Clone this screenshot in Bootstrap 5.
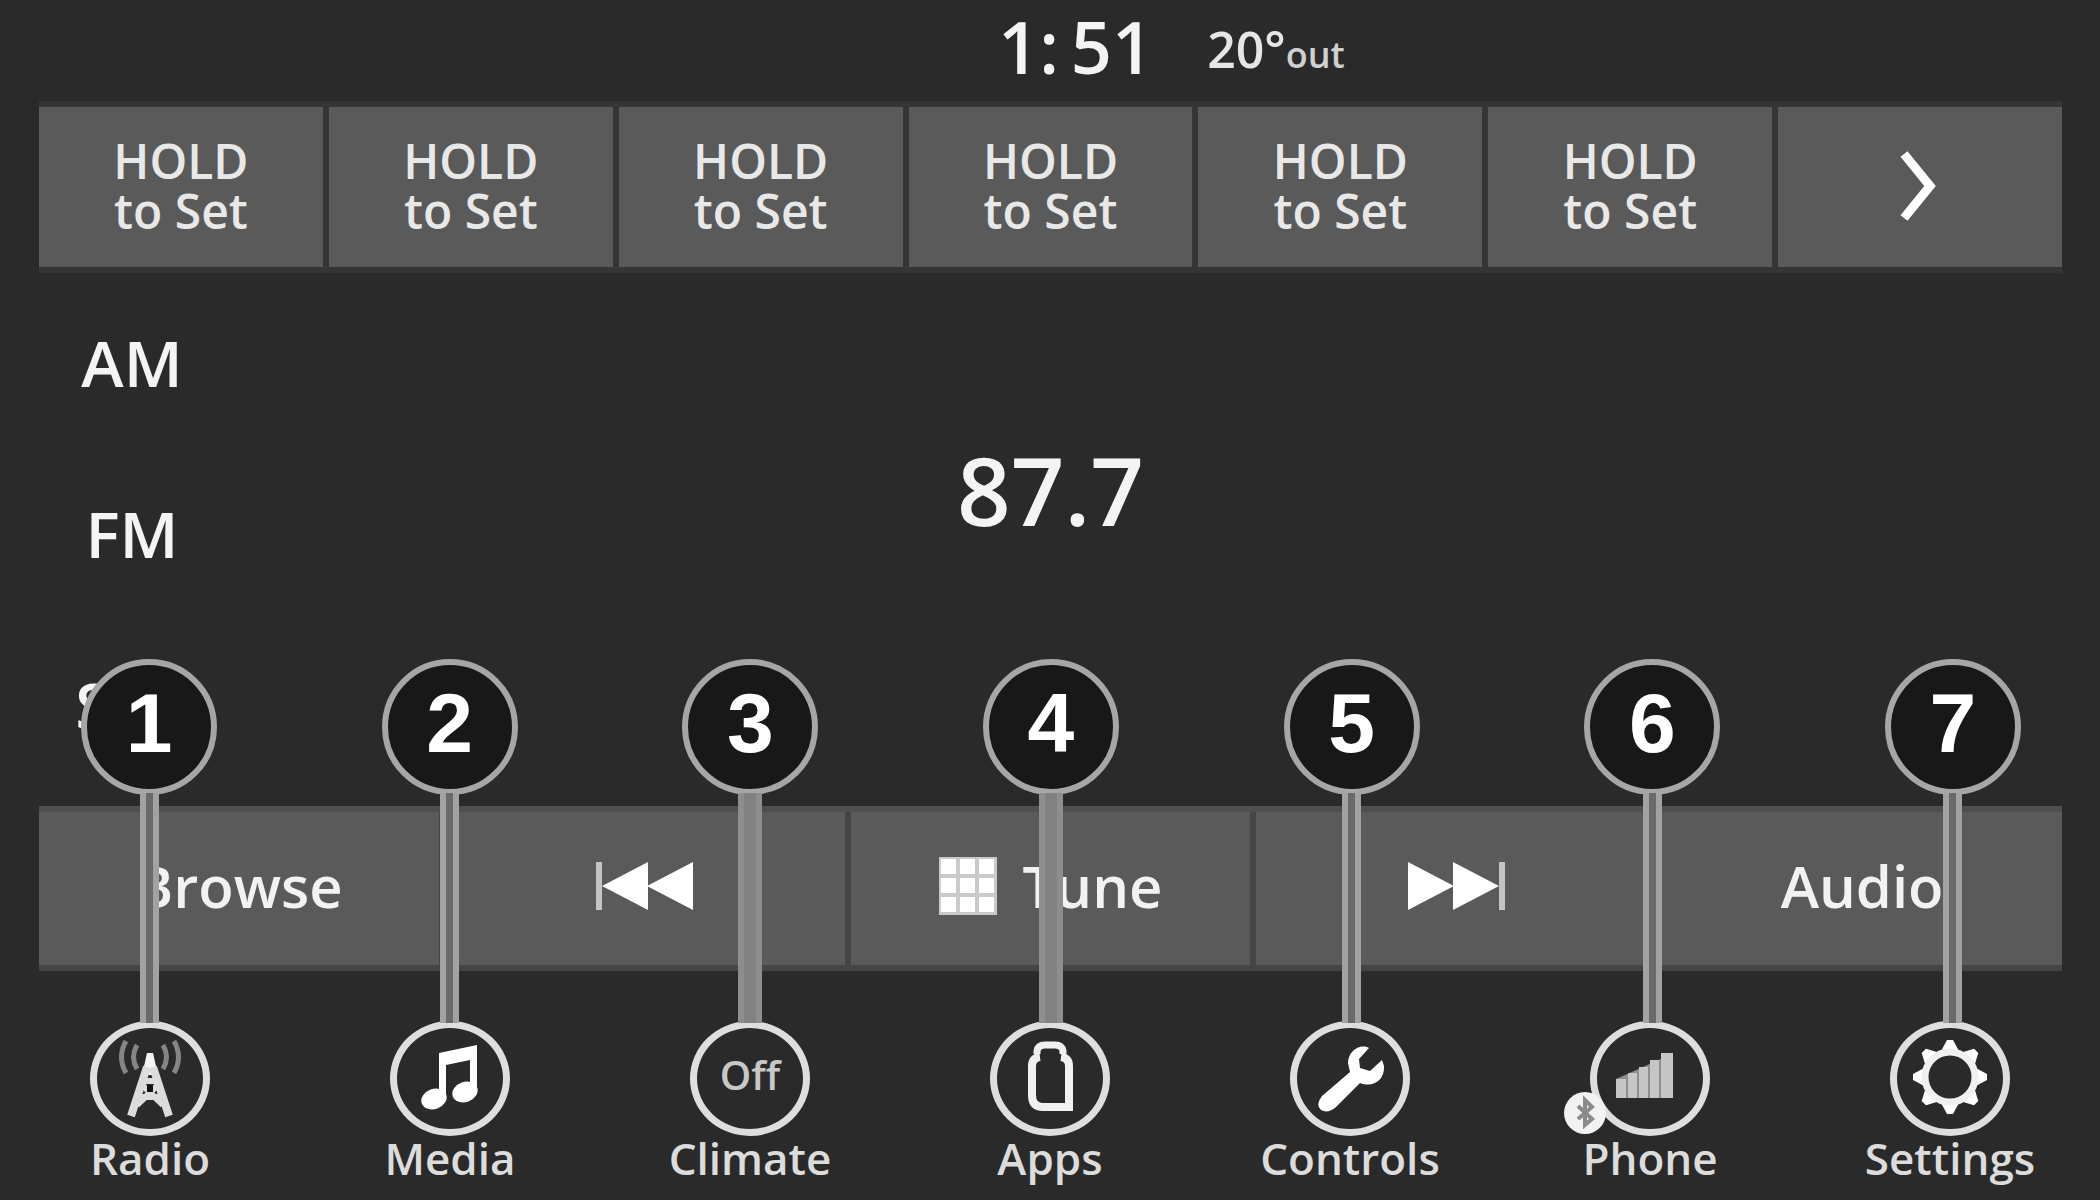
<!DOCTYPE html>
<html lang="en">
<head>
<meta charset="utf-8">
<meta name="viewport" content="width=device-width, initial-scale=1">
<title>Radio</title>
<link href="https://cdn.jsdelivr.net/npm/bootstrap@5.3.0/dist/css/bootstrap.min.css" rel="stylesheet">
<style>
  body { background: #2a2a2a; color: #f4f4f4; font-family: "Open Sans", "Noto Sans", sans-serif; font-weight: 600; }
  .key { background: #5a5a5a; border: 0; border-radius: 0; color: #f2f2f2; font-weight: 600; padding: 0; }
  .key:hover, .key:focus { background: #646464; color: #fff; }
  .bare { background: none; border: 0; color: inherit; font-weight: 600; padding: 0; }

  .status { height: 101px; }
  .readout { margin-left: -52px; }
  .clock { font-size: 72px; line-height: 92px; }
  .outside { font-size: 50px; line-height: 98px; margin-left: 54px; color: #e6e6e6; }
  .outside small { font-size: 36px; font-weight: 600; color: #d0d0d0; }

  .edge { margin: 0 38px 0 39px; }
  .presets { background: #353535; gap: 6px; padding: 6px 0; }
  .presets .key { height: 160px; font-size: 48px; line-height: 50px; color: #e8e8e8; padding-bottom: 2px; }

  .tuner { padding-top: 4px; }
  .bands { width: 186px; }
  .bands .bare { height: 171px; font-size: 64px; line-height: 64px; }
  .frequency { font-size: 94px; line-height: 100px; padding-bottom: 104px; }

  .transport { background: #454545; gap: 6px; padding-bottom: 6px; border-top: 6px solid #4f4f4f; }
  .transport .key { height: 153px; font-size: 58px; line-height: 60px; gap: 26px; padding-bottom: 5px; }

  .dock { padding: 50px 0 20px; }
  .dock-item { font-size: 44px; line-height: 44px; color: #dcdcdc; }
  .ring { width: 120px; height: 115px; border: 7px solid #dedede; border-radius: 50%; background: #2a2a2a; }
  .ring svg { position: absolute; left: -7px; top: -7px; }
  .ring .signal { left: -35px; }
  .ring-text { font-size: 40px; line-height: 44px; padding-bottom: 8px; color: #c8c8c8; }
  .callouts { position: absolute; left: 0; right: 0; bottom: calc(100% - 52px); padding: 0 79px 0 81px; pointer-events: none; }
  .bubble { width: 136px; height: 136px; border: 6px solid #a6a6a6; border-radius: 50%; background: #181818; color: #fff; font: 700 84px/116px "Liberation Sans", sans-serif; padding-bottom: 4px; }
  .stem { width: 19px; height: 230px; margin-top: -2px; background: #6a6a6a; border: solid #a2a2a2; border-width: 0 6px; }
  .stem-soft { width: 24px; background: #828282; border-color: #8e8e8e; }
</style>
</head>
<body class="d-flex flex-column min-vh-100 overflow-x-hidden">

<header class="status position-relative d-flex">
  <div class="w-50"></div>
  <div class="readout d-flex align-items-start text-nowrap">
    <span class="clock">1:&thinsp;51</span>
    <span class="outside">20°<small>out</small></span>
  </div>
</header>

<nav class="presets edge d-flex" aria-label="Presets">
  <button class="btn key col">HOLD<br>to Set</button>
  <button class="btn key col">HOLD<br>to Set</button>
  <button class="btn key col">HOLD<br>to Set</button>
  <button class="btn key col">HOLD<br>to Set</button>
  <button class="btn key col">HOLD<br>to Set</button>
  <button class="btn key col">HOLD<br>to Set</button>
  <button class="btn key col d-flex align-items-center justify-content-center" aria-label="Next presets">
    <svg width="44" height="76" viewBox="0 0 44 76" fill="none" stroke="#fff" stroke-width="9"><path d="M6 6 32 38 6 70"/></svg>
  </button>
</nav>

<main class="tuner edge d-flex flex-grow-1">
  <div class="bands d-flex flex-column">
    <button class="bare">AM</button>
    <button class="bare">FM</button>
    <button class="bare">SAT</button>
  </div>
  <div class="frequency flex-grow-1 d-flex align-items-center justify-content-center">87.7</div>
  <div class="bands"></div>
</main>

<div class="transport edge d-flex">
  <button class="btn key col">Browse</button>
  <button class="btn key col d-flex align-items-center justify-content-center" aria-label="Previous">
    <svg width="98" height="48" viewBox="0 0 98 48" fill="#fff"><path fill="#c4c4c4" d="M0 0h6v48H0z"/><path d="M6 24 52 0v48zM51 24 97 0v48z"/></svg>
  </button>
  <button class="btn key col d-flex align-items-center justify-content-center">
    <svg width="58" height="58" viewBox="0 0 58 58"><path fill="#cacaca" d="M0 0h58v58H0z"/><path fill="#fff" d="M2 2h15v15H2zM21 2h15v15H21zM40 2h15v15H40zM2 21h15v15H2zM21 21h15v15H21zM40 21h15v15H40zM2 40h15v15H2zM21 40h15v15H21zM40 40h15v15H40z"/></svg>
    <span>Tune</span>
  </button>
  <button class="btn key col d-flex align-items-center justify-content-center" aria-label="Next">
    <svg width="98" height="48" viewBox="0 0 98 48" fill="#fff"><path fill="#c4c4c4" d="M92 0h6v48h-6z"/><path d="M92 24 46 0v48zM47 24 1 0v48z"/></svg>
  </button>
  <button class="btn key col">Audio</button>
</div>

<footer class="dock position-relative d-flex">
  <button class="bare dock-item col d-flex flex-column align-items-center">
    <span class="ring position-relative">
      <svg width="120" height="115" viewBox="0 0 120 115" fill="none">
        <g stroke="#858585" stroke-width="5"><path d="M36 20Q27 36 36 52M47 24Q40 36 47 48M84 20Q93 36 84 52M73 24Q80 36 73 48"/></g>
        <path fill="#f4f4f4" d="M57 32h6l5 22H52z"/>
        <path stroke="#dcdcdc" stroke-width="8" d="M57 46 41 95M63 46 79 95"/>
        <path stroke="#dcdcdc" stroke-width="6" d="M51 60h18M47 76h26M50 62 73 84M70 62 47 84"/>
        <path fill="#111" d="M57 64h6v7h-6z"/>
      </svg>
    </span>Radio
  </button>
  <button class="bare dock-item col d-flex flex-column align-items-center">
    <span class="ring position-relative">
      <svg width="120" height="115" viewBox="0 0 120 115" fill="#fff">
        <path d="M49 32 87 24V70H80V39L56 44V78H49z"/>
        <ellipse cx="44" cy="78" rx="13" ry="10" transform="rotate(-20 44 78)"/>
        <ellipse cx="75" cy="71" rx="13" ry="10" transform="rotate(-20 75 71)"/>
      </svg>
    </span>Media
  </button>
  <button class="bare dock-item col d-flex flex-column align-items-center">
    <span class="ring ring-text d-flex align-items-center justify-content-center">Off</span>Climate
  </button>
  <button class="bare dock-item col d-flex flex-column align-items-center">
    <span class="ring position-relative">
      <svg width="120" height="115" viewBox="0 0 120 115" fill="none" stroke="#f0f0f0" stroke-width="7">
        <path d="M47 33V30Q48 24 55 24H65Q72 24 73 30V33"/>
        <path stroke-width="8" d="M50 36Q42 37 42 45V74Q42 86 53 86H79V45Q79 37 71 36"/>
      </svg>
    </span>Apps
  </button>
  <button class="bare dock-item col d-flex flex-column align-items-center">
    <span class="ring position-relative">
      <svg width="120" height="115" viewBox="0 0 120 115" fill="#fff">
        <path d="M79 27C70 22 58 30 58 42L60 51 32 75Q25 84 31 89 38 93 46 86L70 62C82 67 95 60 94 45L92 39 80 50 70 47 69 38z"/>
      </svg>
    </span>Controls
  </button>
  <button class="bare dock-item col d-flex flex-column align-items-center">
    <span class="ring position-relative">
      <svg class="signal" width="148" height="115" viewBox="-28 0 148 115">
        <path fill="#8e8e8e" d="M26 58 82 33V77H26z"/>
        <path fill="#c6c6c6" d="M26 58h10v19H26zM38 52h9v25h-9zM49 46h9v31h-9zM60 39h9v38h-9zM71 32h12v45H71z"/>
        <circle cx="-5" cy="92" r="21" fill="#f2f2f2"/>
        <path fill="none" stroke="#8a8a8a" stroke-width="4" d="M-12 85 2 98-5 104V79L2 86-12 98"/>
      </svg>
    </span>Phone
  </button>
  <button class="bare dock-item col d-flex flex-column align-items-center">
    <span class="ring position-relative">
      <svg width="120" height="115" viewBox="0 0 120 115">
        <g fill="#fff">
          <path id="t" d="M50 32 57 19h6l7 13z"/>
          <use href="#t" transform="rotate(45 60 56)"/><use href="#t" transform="rotate(90 60 56)"/><use href="#t" transform="rotate(135 60 56)"/>
          <use href="#t" transform="rotate(180 60 56)"/><use href="#t" transform="rotate(225 60 56)"/><use href="#t" transform="rotate(270 60 56)"/><use href="#t" transform="rotate(315 60 56)"/>
        </g>
        <circle cx="60" cy="56" r="25" fill="none" stroke="#f0f0f0" stroke-width="7"/>
      </svg>
    </span>Settings
  </button>

  <div class="callouts d-flex justify-content-between">
    <div class="d-flex flex-column align-items-center"><span class="bubble text-center">1</span><span class="stem"></span></div>
    <div class="d-flex flex-column align-items-center"><span class="bubble text-center">2</span><span class="stem"></span></div>
    <div class="d-flex flex-column align-items-center"><span class="bubble text-center">3</span><span class="stem stem-soft"></span></div>
    <div class="d-flex flex-column align-items-center"><span class="bubble text-center">4</span><span class="stem stem-soft"></span></div>
    <div class="d-flex flex-column align-items-center"><span class="bubble text-center">5</span><span class="stem"></span></div>
    <div class="d-flex flex-column align-items-center"><span class="bubble text-center">6</span><span class="stem"></span></div>
    <div class="d-flex flex-column align-items-center"><span class="bubble text-center">7</span><span class="stem"></span></div>
  </div>
</footer>

<script src="https://cdn.jsdelivr.net/npm/bootstrap@5.3.0/dist/js/bootstrap.bundle.min.js"></script>
</body>
</html>
